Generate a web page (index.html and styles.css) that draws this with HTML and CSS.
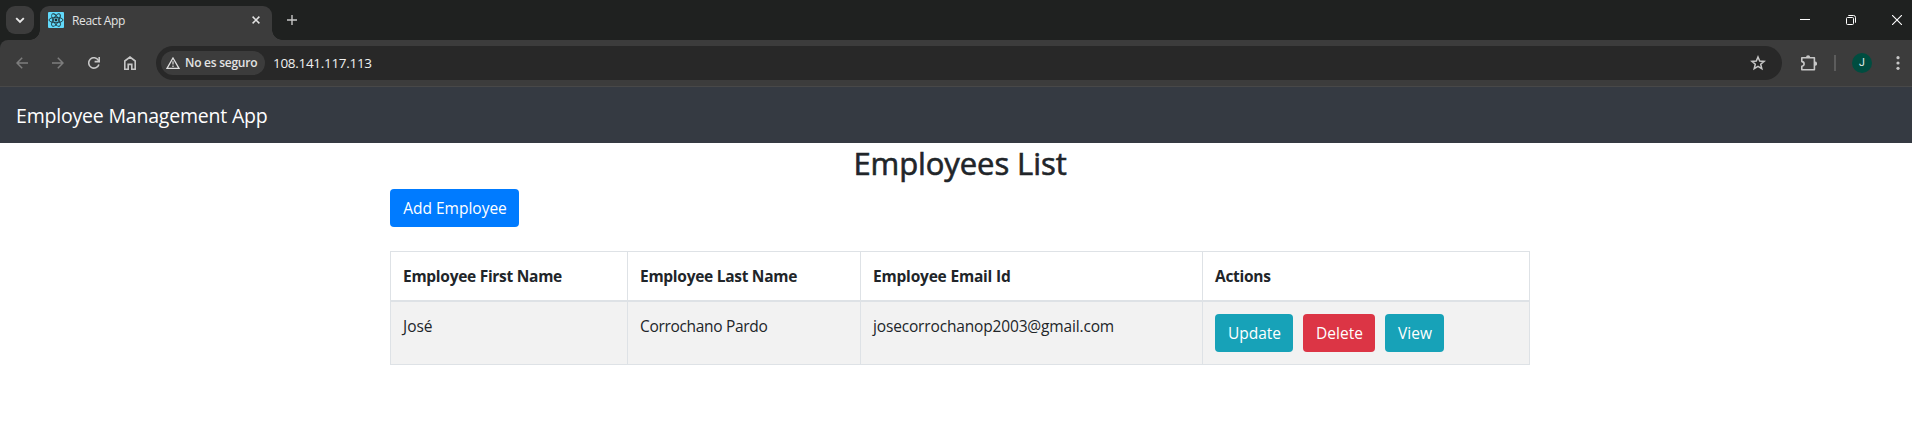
FILE: index.html
```html
<!DOCTYPE html>
<html lang="es">
<head>
<meta charset="utf-8">
<title>React App</title>
<link rel="stylesheet" href="styles.css">
</head>
<body>
<div class="tabstrip">
  <div class="tab-search"><svg width="10" height="7" viewBox="0 0 10 7"><path d="M1.2 1.2 5 5 8.8 1.2" fill="none" stroke="#e8e8e8" stroke-width="1.9"/></svg></div>
  <div class="tab">
    <svg class="favicon" width="16" height="16" viewBox="0 0 16 16"><rect width="16" height="16" rx="1" fill="#61dafb"/><g fill="none" stroke="#20383f" stroke-width=".9"><ellipse cx="8" cy="8" rx="7" ry="2.7"/><ellipse cx="8" cy="8" rx="7" ry="2.7" transform="rotate(60 8 8)"/><ellipse cx="8" cy="8" rx="7" ry="2.7" transform="rotate(120 8 8)"/></g><circle cx="8" cy="8" r="1.4" fill="#20282b"/></svg>
    <span class="tab-title">React App</span>
    <svg class="tab-close" width="8" height="8" viewBox="0 0 8 8"><path d="M.6.6 7.4 7.4M7.4.6.6 7.4" stroke="#e3e3e3" stroke-width="1.5"/></svg>
  </div>
  <svg class="new-tab" width="10" height="10" viewBox="0 0 10 10"><path d="M5 0V10M0 5H10" stroke="#c7c7c7" stroke-width="1.4"/></svg>
  <div class="window-controls">
    <svg width="10" height="10" viewBox="0 0 10 10"><path d="M0 4.5H10" stroke="#fff"/></svg>
    <svg width="10" height="10" viewBox="0 0 10 10" fill="none" stroke="#fff"><rect x=".5" y="2.5" width="7" height="7" rx="1"/><path d="M2.3.5H7.5Q9.5.5 9.5 2.5V7.7"/></svg>
    <svg width="10" height="10" viewBox="0 0 10 10"><path d="M0 0 10 10M10 0 0 10" stroke="#fff" stroke-width="1.1"/></svg>
  </div>
</div>
<div class="toolbar">
  <div class="nav-icons">
    <svg width="12" height="12" viewBox="0 0 12 12" fill="none" stroke="#7d7d7d" stroke-width="1.5"><path d="M12 6H1M6.2.7 1 6 6.2 11.3"/></svg>
    <svg width="12" height="12" viewBox="0 0 12 12" fill="none" stroke="#7d7d7d" stroke-width="1.5"><path d="M0 6H11M5.8.7 11 6 5.8 11.3"/></svg>
    <svg width="12" height="12" viewBox="0 0 12 12" fill="none" stroke="#c7c7c7" stroke-width="1.6"><path d="M10.9 7.4A5.2 5.2 0 1 1 10.4 3.3L11 4.2"/><path d="M11.2 0V4.6H6.6"/></svg>
    <svg width="12" height="14" viewBox="0 0 12 14" fill="none" stroke="#c7c7c7" stroke-width="1.6"><path d="M.8 5 6 1 11.2 5V13.2H7.8V8.4H4.2V13.2H.8Z"/></svg>
  </div>
  <div class="omnibox">
    <div class="chip">
      <svg width="14" height="12" viewBox="0 0 14 12"><path d="M7 1 13 11.3H1Z" fill="none" stroke="#dedede" stroke-width="1.3"/><path d="M7 4.3V7.6M7 8.6V10" stroke="#dedede" stroke-width="1.2"/></svg>
      <span class="chip-text">No es seguro</span>
    </div>
    <span class="url">108.141.117.113</span>
    <svg class="star" width="16" height="16" viewBox="0 0 16 16"><path d="M8 2 9.7 6.1 14.1 6.4 10.7 9.3 11.8 13.7 8 11.3 4.2 13.7 5.3 9.3 1.9 6.4 6.3 6.1Z" fill="none" stroke="#c7c7c7" stroke-width="1.5"/></svg>
  </div>
  <svg class="extensions" width="16" height="16" viewBox="0 0 16 16"><path d="M.8 2.8H13.4V14.8H.8V11.2A2.3 2.3 0 0 0 .8 6.6Z" fill="none" stroke="#c7c7c7" stroke-width="1.6" stroke-linejoin="round"/><path d="M5 2.4A2.1 2.1 0 0 1 9.2 2.4ZM14 6.6A2.1 2.1 0 0 1 14 10.8Z" fill="#c7c7c7"/></svg>
  <span class="divider"></span>
  <span class="avatar">J</span>
  <svg class="menu" width="4" height="14" viewBox="0 0 4 14" fill="#c7c7c7"><circle cx="2" cy="1.7" r="1.6"/><circle cx="2" cy="7" r="1.6"/><circle cx="2" cy="12.3" r="1.6"/></svg>
</div>
<header class="navbar"><span class="brand">Employee Management App</span></header>
<main class="container">
  <h2 class="title">Employees List</h2>
  <button class="btn btn-primary">Add Employee</button>
  <table class="table">
    <colgroup><col class="col-first"><col class="col-last"><col class="col-email"><col class="col-actions"></colgroup>
    <thead><tr><th>Employee First Name</th><th>Employee Last Name</th><th class="th-email">Employee Email Id</th><th>Actions</th></tr></thead>
    <tbody><tr>
      <td>José</td><td class="td-last">Corrochano Pardo</td><td class="td-email">josecorrochanop2003@gmail.com</td>
      <td><div class="actions"><button class="btn btn-info btn-update">Update</button><button class="btn btn-danger">Delete</button><button class="btn btn-info btn-view">View</button></div></td>
    </tr></tbody>
  </table>
</main>
</body>
</html>
```
FILE: styles.css
```css
* { box-sizing: border-box; }
body { margin: 0; background: #fff; color: #212529; font: 15.5px/24px "Open Sans", "Noto Sans", sans-serif; overflow: hidden; }
svg { display: block; flex: none; }
span { white-space: nowrap; }

.tabstrip { height: 40px; background: #1f2120; display: flex; align-items: flex-start; }
.tab-search { width: 28px; height: 28px; margin: 6px 6px 0; border-radius: 9px; background: #3c3c3c; display: flex; align-items: center; justify-content: center; }
.tab { position: relative; width: 232px; height: 34px; margin-top: 6px; padding: 0 12px 6px 8px; border-radius: 9px 9px 0 0; background: #3c3c3c; display: flex; align-items: center; }
.tab::before, .tab::after { content: ""; position: absolute; bottom: 0; width: 10px; height: 10px; }
.tab::before { left: -10px; background: radial-gradient(circle at 0 0, transparent 9.5px, #3c3c3c 10px); }
.tab::after { right: -10px; background: radial-gradient(circle at 100% 0, transparent 9.5px, #3c3c3c 10px); }
.tab-title { margin: 1px 0 0 8px; font-size: 12px; letter-spacing: -0.35px; color: #e3e3e3; }
.tab-close { margin-left: auto; }
.new-tab { margin: 15px 0 0 15px; }
.window-controls { display: flex; gap: 36px; margin: 15px 10px 0 auto; }

.toolbar { height: 47px; background: #3c3c3c; border-bottom: 1px solid #484848; border-radius: 8px 0 0 0; box-shadow: -8px -8px 0 8px #1f2120; display: flex; align-items: center; clip-path: inset(0); }
.nav-icons { display: flex; align-items: center; gap: 24px; margin-left: 16px; }
.omnibox { width: 1626px; height: 34px; margin: 0 0 0 20px; padding: 0 16px 0 5px; border-radius: 17px; background: #282828; display: flex; align-items: center; }
.chip { width: 104px; height: 24px; border-radius: 12px; background: #3c3c3c; padding-left: 5px; display: flex; align-items: center; gap: 5px; }
.chip-text { font-size: 12px; font-weight: 600; color: #e3e3e3; letter-spacing: -0.25px; }
.url { margin-left: 8px; font-size: 13.5px; letter-spacing: -0.3px; color: #f0f0f0; }
.star { margin-left: auto; }
.extensions { margin-left: 19px; }
.divider { width: 2px; height: 16px; margin-left: 17px; background: #5c5c5c; }
.avatar { width: 20px; height: 20px; margin-left: 16px; border-radius: 50%; background: #004d40; color: #e6efed; font: 10.5px/20px Roboto, sans-serif; text-align: center; }
.menu { margin-left: 24px; }

.navbar { height: 56px; padding: 2px 16px 0; background: #353a42; display: flex; align-items: center; }
.brand { font-size: 19.5px; letter-spacing: -0.2px; color: #fff; }

.container { width: 1140px; margin: 0 0 0 390px; }
.title { margin: 0 0 8px; height: 38px; font-size: 31px; font-weight: 500; line-height: 40px; text-align: center; letter-spacing: -0.08px; -webkit-text-stroke: 0.6px #212529; }
.btn { display: block; height: 38px; padding: 0 0 0 1px; border: 0; border-radius: 4px; color: #fff; font: inherit; text-align: center; }
.btn-primary { width: 129px; background: #007bff; }
.btn-info { background: #17a2b8; }
.btn-danger { width: 72px; background: #dc3545; }
.btn-update { width: 78px; }
.btn-view { width: 59px; }

.table { width: 1140px; margin-top: 24px; border-collapse: collapse; table-layout: fixed; }
.col-first { width: 237px; }
.col-last { width: 233px; }
.col-email { width: 342px; }
.col-actions { width: 327px; }
.table th, .table td { padding: 12px; border: 1px solid #dee2e6; text-align: left; vertical-align: top; white-space: nowrap; }
.table th { border-bottom-width: 2px; font-weight: 700; letter-spacing: -0.28px; }
.table .th-email { letter-spacing: -0.2px; }
.table .td-last { letter-spacing: -0.32px; }
.table .td-email { letter-spacing: -0.16px; }
.table tbody tr { background: #f2f2f2; }
.actions { display: flex; gap: 10px; }
```
